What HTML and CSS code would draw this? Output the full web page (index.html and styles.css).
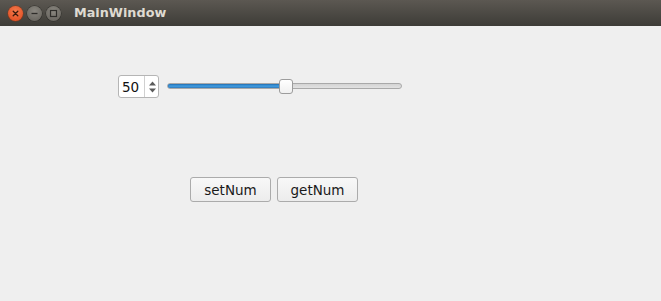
FILE: index.html
```html
<!DOCTYPE html>
<html>
<head>
<meta charset="utf-8">
<link rel="stylesheet" href="styles.css">
</head>
<body>
<div class="window">
  <div class="titlebar">
    <div class="wm-buttons">
      <span class="wm-btn close">
        <svg width="15" height="15" viewBox="0 0 15 15"><path d="M5.2 5.2 L9.8 9.8 M9.8 5.2 L5.2 9.8" stroke="#3a1a0c" stroke-width="1.3" stroke-linecap="round"/></svg>
      </span>
      <span class="wm-btn">
        <svg width="15" height="15" viewBox="0 0 15 15"><path d="M4.5 7.5 H10.5" stroke="#2e2d2a" stroke-width="1.3"/></svg>
      </span>
      <span class="wm-btn">
        <svg width="15" height="15" viewBox="0 0 15 15"><rect x="4.5" y="4.5" width="6" height="6" fill="none" stroke="#2e2d2a" stroke-width="1.2"/></svg>
      </span>
    </div>
    <div class="title">MainWindow</div>
  </div>
  <div class="content">
    <div class="spin-row">
      <div class="spinbox">
        <span class="spin-value">50</span>
        <span class="spin-arrows">
          <svg width="9" height="18" viewBox="0 0 9 18"><path d="M1 7.5 L4.5 3.5 L8 7.5 Z" fill="#5a5a5a"/><path d="M1 10.5 L4.5 14.5 L8 10.5 Z" fill="#5a5a5a"/></svg>
        </span>
      </div>
      <div class="slider">
        <div class="groove">
          <div class="fill" style="width: 118px"></div>
        </div>
        <div class="handle"></div>
      </div>
    </div>
    <div class="btn-row">
      <button class="btn">setNum</button>
      <button class="btn">getNum</button>
    </div>
  </div>
</div>
</body>
</html>
```
FILE: styles.css
```css
html, body {
  margin: 0;
  padding: 0;
  background: #efefef;
  font-family: "DejaVu Sans", "Noto Sans", sans-serif;
}
.window {
  width: 661px;
  height: 301px;
  display: flex;
  flex-direction: column;
  background: #efefef;
}
.titlebar {
  height: 26px;
  display: flex;
  align-items: center;
  background: linear-gradient(#5c5852, #3d3c37);
  flex-shrink: 0;
}
.wm-buttons {
  display: flex;
  gap: 4px;
  margin-left: 8px;
}
.wm-btn {
  width: 15px;
  height: 15px;
  border-radius: 50%;
  background: radial-gradient(circle at 50% 35%, #8a8780, #615e58);
  box-shadow: 0 0 0 0.5px #2f2e2a;
  display: flex;
}
.wm-btn.close {
  background: radial-gradient(circle at 50% 35%, #f37a4c, #e0461b);
  box-shadow: 0 0 0 0.5px #8a3514;
}
.title {
  margin-left: 13px;
  color: #dfdbd2;
  font-weight: bold;
  font-size: 12.8px;
  padding-bottom: 1px;
}
.content {
  padding: 49px 0 0 118px;
  display: flex;
  flex-direction: column;
}
.spin-row {
  display: flex;
  align-items: center;
  gap: 8px;
}
.spinbox {
  box-sizing: border-box;
  width: 41px;
  height: 23px;
  background: #ffffff;
  border: 1px solid #b5b5b5;
  border-radius: 3px;
  display: flex;
  align-items: center;
}
.spin-value {
  font-size: 13.5px;
  color: #111;
  padding-left: 3px;
  width: 22px;
}
.spin-arrows {
  height: 100%;
  border-left: 1px solid #d0d0d0;
  display: flex;
  align-items: center;
  padding-left: 3px;
}
.slider {
  position: relative;
  width: 235px;
  height: 15px;
  display: flex;
  align-items: center;
  margin-top: -1px;
}
.groove {
  box-sizing: border-box;
  width: 235px;
  height: 6px;
  border: 1px solid #a9a9a9;
  border-radius: 3px;
  background: linear-gradient(#d4d4d4, #e2e2e2);
  display: flex;
  overflow: hidden;
}
.fill {
  height: 100%;
  background: linear-gradient(#2c87cf, #4aa0e0);
  box-shadow: inset 0 0 0 0.5px #2468a8;
}
.handle {
  position: absolute;
  left: 112px;
  top: 0;
  box-sizing: border-box;
  width: 14px;
  height: 15px;
  border: 1px solid #9c9c9c;
  border-radius: 3px;
  background: linear-gradient(#ffffff, #f0f0f0);
}
.btn-row {
  display: flex;
  gap: 6px;
  margin-top: 79px;
  margin-left: 72px;
}
.btn {
  box-sizing: border-box;
  width: 81px;
  height: 25px;
  border: 1px solid #ababab;
  border-radius: 3px;
  background: linear-gradient(#f8f8f8, #ececec);
  font-family: "DejaVu Sans", "Noto Sans", sans-serif;
  font-size: 13.5px;
  color: #1a1a1a;
  padding: 0;
}
```
